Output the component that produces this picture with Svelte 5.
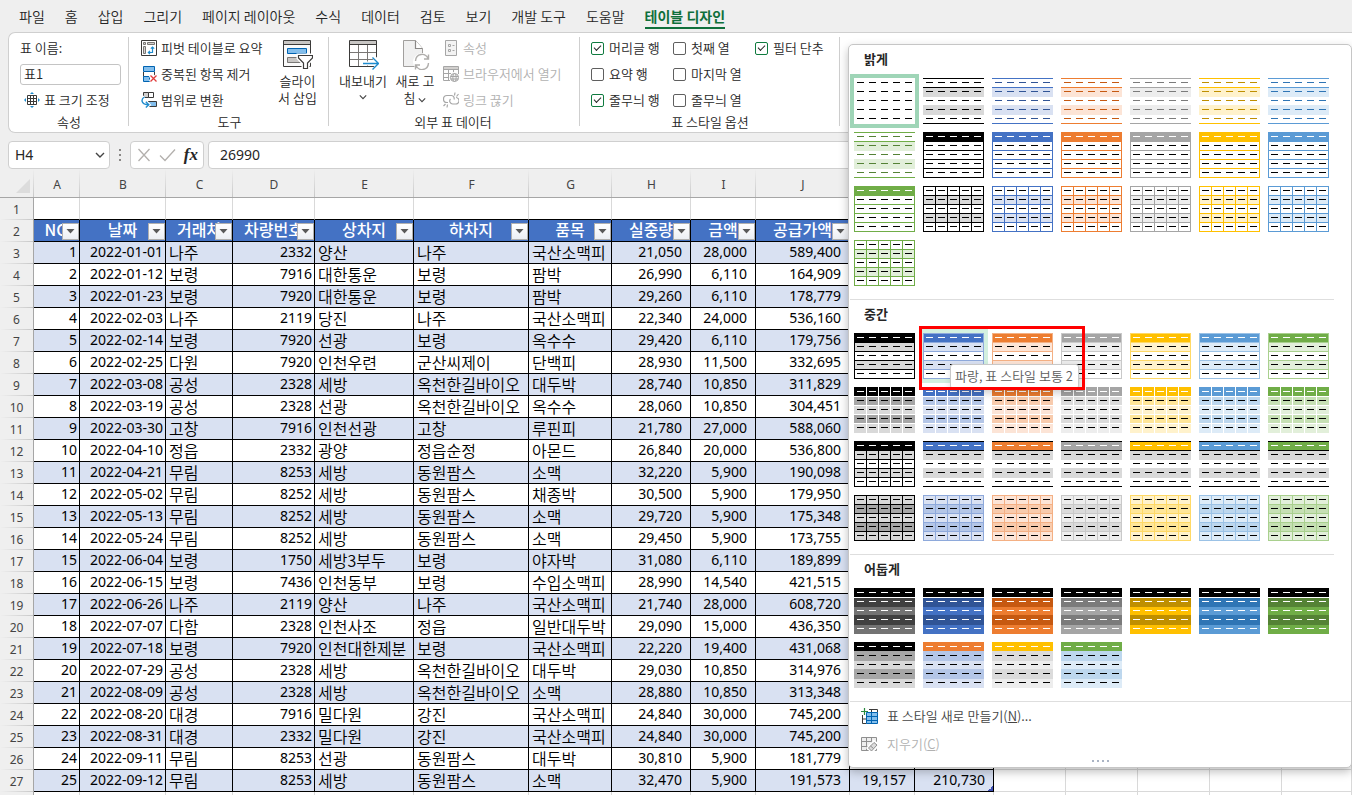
<script>
  const tabs = ['파일', '홈', '삽입', '그리기', '페이지 레이아웃', '수식', '데이터', '검토', '보기', '개발 도구', '도움말', '테이블 디자인'];

  const columns = [
    { letter: 'A', width: 46, label: 'NO', kind: 'num' },
    { letter: 'B', width: 86, label: '날짜', kind: 'num' },
    { letter: 'C', width: 67, label: '거래처', kind: 'text' },
    { letter: 'D', width: 82, label: '차량번호', kind: 'num' },
    { letter: 'E', width: 99, label: '상차지', kind: 'text' },
    { letter: 'F', width: 115, label: '하차지', kind: 'text' },
    { letter: 'G', width: 83, label: '품목', kind: 'text' },
    { letter: 'H', width: 79, label: '실중량', kind: 'money' },
    { letter: 'I', width: 65, label: '금액', kind: 'money' },
    { letter: 'J', width: 94, label: '공급가액', kind: 'money' },
    { letter: 'K', width: 65, label: '', kind: 'money' },
    { letter: 'L', width: 79, label: '', kind: 'money' }
  ];
  const spare = ['M', 'N', 'O', 'P', 'Q'];

  const source = [
    ['2022-01-01', '나주', 2332, '양산', '나주', '국산소맥피', 21050, 28000, 589400],
    ['2022-01-12', '보령', 7916, '대한통운', '보령', '팜박', 26990, 6110, 164909],
    ['2022-01-23', '보령', 7920, '대한통운', '보령', '팜박', 29260, 6110, 178779],
    ['2022-02-03', '나주', 2119, '당진', '나주', '국산소맥피', 22340, 24000, 536160],
    ['2022-02-14', '보령', 7920, '선광', '보령', '옥수수', 29420, 6110, 179756],
    ['2022-02-25', '다원', 7920, '인천우련', '군산씨제이', '단백피', 28930, 11500, 332695],
    ['2022-03-08', '공성', 2328, '세방', '옥천한길바이오', '대두박', 28740, 10850, 311829],
    ['2022-03-19', '공성', 2328, '선광', '옥천한길바이오', '옥수수', 28060, 10850, 304451],
    ['2022-03-30', '고창', 7916, '인천선광', '고창', '루핀피', 21780, 27000, 588060],
    ['2022-04-10', '정읍', 2332, '광양', '정읍순정', '아몬드', 26840, 20000, 536800],
    ['2022-04-21', '무림', 8253, '세방', '동원팜스', '소맥', 32220, 5900, 190098],
    ['2022-05-02', '무림', 8252, '세방', '동원팜스', '채종박', 30500, 5900, 179950],
    ['2022-05-13', '무림', 8252, '세방', '동원팜스', '소맥', 29720, 5900, 175348],
    ['2022-05-24', '무림', 8252, '세방', '동원팜스', '소맥', 29450, 5900, 173755],
    ['2022-06-04', '보령', 1750, '세방3부두', '보령', '야자박', 31080, 6110, 189899],
    ['2022-06-15', '보령', 7436, '인천동부', '보령', '수입소맥피', 28990, 14540, 421515],
    ['2022-06-26', '나주', 2119, '양산', '나주', '국산소맥피', 21740, 28000, 608720],
    ['2022-07-07', '다함', 2328, '인천사조', '정읍', '일반대두박', 29090, 15000, 436350],
    ['2022-07-18', '보령', 7920, '인천대한제분', '보령', '국산소맥피', 22220, 19400, 431068],
    ['2022-07-29', '공성', 2328, '세방', '옥천한길바이오', '대두박', 29030, 10850, 314976],
    ['2022-08-09', '공성', 2328, '세방', '옥천한길바이오', '소맥', 28880, 10850, 313348],
    ['2022-08-20', '대경', 7916, '밀다원', '강진', '국산소맥피', 24840, 30000, 745200],
    ['2022-08-31', '대경', 2332, '밀다원', '강진', '국산소맥피', 24840, 30000, 745200],
    ['2022-09-11', '무림', 8253, '선광', '동원팜스', '대두박', 30810, 5900, 181779],
    ['2022-09-12', '무림', 8253, '세방', '동원팜스', '소맥', 32470, 5900, 191573]
  ];
  const money = (n) => n.toLocaleString('en-US');
  const rows = source.map((r, i) => {
    const tax = Math.floor(r[8] / 10);
    return [i + 1, ...r.slice(0, 6), ...[r[6], r[7], r[8], tax, r[8] + tax].map(money)];
  });

  // base, darker shade, pale tint, middle tint, border tint
  const hues = [
    { name: '검정', base: '#000000', dark: '#000000', pale: '#d9d9d9', mid: '#a6a6a6', edge: '#000000', deep: '#404040', body: '#737373' },
    { name: '파랑', base: '#4472c4', dark: '#305496', pale: '#d9e1f2', mid: '#b4c6e7', edge: '#8ea9db' },
    { name: '주황', base: '#ed7d31', dark: '#c65911', pale: '#fce4d6', mid: '#f8cbad', edge: '#f4b084' },
    { name: '회색', base: '#a5a5a5', dark: '#7b7b7b', pale: '#ededed', mid: '#dbdbdb', edge: '#c9c9c9' },
    { name: '황금색', base: '#ffc000', dark: '#bf8f00', pale: '#fff2cc', mid: '#ffe699', edge: '#ffd966' },
    { name: '연한 파랑', base: '#5b9bd5', dark: '#2f75b5', pale: '#ddebf7', mid: '#bdd7ee', edge: '#9bc2e6' },
    { name: '녹색', base: '#70ad47', dark: '#548235', pale: '#e2efda', mid: '#c6e0b4', edge: '#a9d08e' }
  ];
  const W = '#ffffff';
  const K = '#000000';
  const ALL = [0, 9, 18, 27, 36, 45];
  const COLS = [0, 12, 24, 36, 48, 60];

  const make = {
    none: () => ({ fills: [W, W, W, W, W], dash: K }),
    lines: (h) => ({ fills: [W, h.pale, W, h.pale, W], dash: h.dark, h: [0, 9, 45], line: h.base }),
    boxed: (h) => ({ fills: [h.base, W, W, W, W], head: W, dash: K, h: ALL, v: [0, 60], line: h.base }),
    grid: (h) => ({ fills: [W, h.pale, W, h.pale, W], dash: K, h: ALL, v: COLS, line: h.base }),
    banded: (h) => ({ fills: [h.base, h.pale, W, h.pale, W], head: W, dash: K, h: ALL, v: [0, 60], line: h.edge }),
    tiles: (h) => ({ fills: [h.base, h.mid, h.pale, h.mid, h.pale], head: W, dash: K, h: [9, 18, 27, 36], v: [12, 24, 36, 48], line: W }),
    ruled: (h) =>
      h.base === K
        ? { fills: [K, h.pale, W, h.pale, W], head: W, dash: K, h: ALL, v: COLS, line: K }
        : { fills: [h.base, '#d9d9d9', W, '#d9d9d9', W], head: W, dash: K, h: [0, 9, 45], line: K },
    full: (h) => ({ fills: [h.pale, h.mid, h.pale, h.mid, h.pale], dash: K, h: ALL, v: COLS, line: h.edge }),
    dark: (h) => {
      const a = h.deep ?? h.dark;
      const b = h.body ?? h.base;
      return { fills: [K, a, b, a, b], dash: W, h: [9], line: W };
    },
    duo: (h, head) => ({ fills: [head, h.mid, h.pale, h.mid, h.pale], head: W, dash: K })
  };
  const list = (kind, label, start) =>
    hues.map((h, i) => ({ name: `${h.name}, 표 스타일 ${label} ${start + i}`, ...make[kind](h) }));

  const sections = [
    {
      title: '밝게',
      items: [
        { name: '없음', selected: true, ...make.none() },
        ...list('lines', '밝게', 1),
        ...list('boxed', '밝게', 8),
        ...list('grid', '밝게', 15)
      ]
    },
    {
      title: '중간',
      items: [
        ...list('banded', '보통', 1),
        ...list('tiles', '보통', 8),
        ...list('ruled', '보통', 15),
        ...list('full', '보통', 22)
      ]
    },
    {
      title: '어둡게',
      items: [
        ...list('dark', '어둡게', 1),
        { name: '검정, 표 스타일 어둡게 8', ...make.duo(hues[0], K) },
        { name: '파랑, 표 스타일 어둡게 9', ...make.duo(hues[1], hues[2].base) },
        { name: '회색, 표 스타일 어둡게 10', ...make.duo(hues[3], hues[4].base) },
        { name: '연한 파랑, 표 스타일 어둡게 11', ...make.duo(hues[5], hues[6].base) }
      ]
    }
  ];
  const hovered = '파랑, 표 스타일 보통 2';

  const options = [
    { label: '머리글 행', on: true },
    { label: '첫째 열', on: false },
    { label: '필터 단추', on: true },
    { label: '요약 행', on: false },
    { label: '마지막 열', on: false },
    null,
    { label: '줄무늬 행', on: true },
    { label: '줄무늬 열', on: false }
  ];
</script>

{#snippet thumb(s)}
  <svg class="thumb" width="61" height="46" viewBox="0 0 61 46" shape-rendering="crispEdges" aria-hidden="true">
    {#each [4, 2, 0, 3, 1] as i}
      <rect x="0" y={i * 9} width="61" height="10" fill={s.fills[i]} />
    {/each}
    {#each s.v ?? [] as x}
      <rect {x} y="0" width="1" height="46" fill={s.line} />
    {/each}
    {#each s.h ?? [] as y}
      <rect x="0" {y} width="61" height="1" fill={s.line} />
    {/each}
    {#each [0, 1, 2, 3, 4] as r}
      {#each [3, 15, 27, 39, 51] as x}
        <rect {x} y={4 + r * 9} width="7" height="1" fill={r === 0 && s.head ? s.head : s.dash} />
      {/each}
    {/each}
  </svg>
{/snippet}

{#snippet chevron(w)}
  <svg width={w} height="6" viewBox="0 0 10 6" fill="none" stroke="#444" stroke-width="1.4" aria-hidden="true"><path d="M1 1l4 4 4-4" /></svg>
{/snippet}

<div class="app">
  <nav class="tabs">
    {#each tabs as tab, i}
      <button class="tab" class:active={i === tabs.length - 1}>{tab}</button>
    {/each}
  </nav>

  <section class="ribbon">
    <div class="group props">
      <div class="stack">
        <label for="table-name">표 이름:</label>
        <div class="line"><input id="table-name" type="text" value="표1" /></div>
        <button class="cmd indent">
          <svg width="16" height="16" viewBox="0 0 16 16" fill="none" aria-hidden="true">
            <path d="M3.500 3.500h9v9h-9zM3.500 6.500h9M3.500 9.500h9M6.500 3.500v9M9.500 3.500v9" stroke="#3b3a39" />
            <path d="M8 0l2 2H6zM8 16l2-2H6zM0 8l2-2v4zM16 8l-2-2v4z" fill="#1e8bcd" />
          </svg>
          표 크기 조정
        </button>
      </div>
      <div class="caption">속성</div>
    </div>

    <div class="group tools">
      <div class="body">
        <div class="stack">
          <button class="cmd">
            <svg width="16" height="16" viewBox="0 0 16 16" fill="none" aria-hidden="true">
              <path d="M.5.5h15v15H.5z" fill="#fff" stroke="#3b3a39" />
              <path d="M2.500 2.500h2v2h-2zM6.500 2.500h7v2h-7zM2.500 6.500h2v7h-2z" fill="#d2d0ce" stroke="#797775" />
              <path d="M11.500 7v5.500H7.500M9.800 8.700l1.700-1.700 1.700 1.700M9 10.800l-1.700 1.700L9 14.200" stroke="#1e8bcd" stroke-width="1.200" />
            </svg>
            피벗 테이블로 요약
          </button>
          <button class="cmd">
            <svg width="16" height="16" viewBox="0 0 16 16" fill="none" aria-hidden="true">
              <path d="M2.500.500h11v5h-11z" fill="#83beec" stroke="#0063b1" />
              <path d="M2.500 6v4.500h11V6" fill="#fff" stroke="#3b3a39" />
              <path d="M2.500 10.500h6v5h-6z" fill="#83beec" stroke="#0063b1" />
              <path d="M9 9.500l6.500 6M15.500 9.500L9 15.500" stroke="#fff" stroke-width="3.500" />
              <path d="M9.500 9.500l6 6M15.500 9.500l-6 6" stroke="#e03c3c" stroke-width="1.300" />
            </svg>
            중복된 항목 제거
          </button>
          <button class="cmd">
            <svg width="16" height="16" viewBox="0 0 16 16" fill="none" aria-hidden="true">
              <path d="M2.500.500h5v5h-5z" fill="#d2d0ce" stroke="#3b3a39" />
              <path d="M7.500.500h5v5h-5z" fill="#fff" stroke="#3b3a39" />
              <path d="M6.500 9.500h9v5h-9z" fill="#83beec" stroke="#3b3a39" />
              <path d="M3.500 5C0 7-.500 12 7 12.800M4.800 9.500l3 3.300-3.300 2.700" stroke="#fff" stroke-width="3.500" />
              <path d="M3.500 5C0 7-.500 12 7 12.800M4.800 9.800l3 3-3 2.700" stroke="#1e8bcd" stroke-width="1.400" />
            </svg>
            범위로 변환
          </button>
        </div>
        <button class="big slicer">
          <svg width="32" height="32" viewBox="0 0 32 32" fill="none" aria-hidden="true">
            <path d="M2.500 2.500h27v26h-27z" fill="#fafafa" stroke="#3b3a39" />
            <path d="M3 3h26v3H3z" fill="#c8c6c4" /><path d="M3 6.500h26" stroke="#3b3a39" />
            <path d="M6.500 10.500h19v5h-19z" fill="#83beec" stroke="#0063b1" />
            <path d="M6.500 19.500h19v5h-19z" fill="#c8c6c4" stroke="#797775" />
            <path d="M17.500 17.500h14v2.500l-5 5v6h-4V25l-5-5z" fill="#fff" stroke="#fff" stroke-width="4" />
            <path d="M17.500 17.500h14v2.500l-5 5v5.500h-4V25l-5-5z" fill="#fff" stroke="#3b3a39" stroke-width="1.200" />
          </svg>
          <span>슬라이<br />서 삽입</span>
        </button>
      </div>
      <div class="caption">도구</div>
    </div>

    <div class="group external">
      <div class="body">
        <button class="big">
          <svg width="32" height="32" viewBox="0 0 32 32" fill="none" aria-hidden="true">
            <path d="M2.500 2.500h27v26h-27z" fill="#fff" />
            <path d="M3 3h26v4H3z" fill="#c8c6c4" />
            <path d="M3 14.500h26M3 21.500h26M11.500 7v21M20.500 7v21" stroke="#797775" />
            <path d="M2.500 2.500h27v26h-27zM2.500 6.500h27" stroke="#3b3a39" />
            <path d="M15 25.500h17M26 18.500l7 7-7 7" stroke="#fff" stroke-width="4" />
            <path d="M16 25.500h15M25.500 19.500l6 6-6 6" stroke="#1e8bcd" stroke-width="1.400" />
          </svg>
          <span>내보내기</span>
          {@render chevron(8)}
        </button>
        <button class="big">
          <svg width="32" height="32" viewBox="0 0 32 32" fill="none" aria-hidden="true">
            <path d="M4.500 2.500h12l7 8v18h-19z" fill="#f0f0f0" stroke="#a19f9d" />
            <path d="M16.500 2.500v8h7" fill="#fff" stroke="#8a8886" stroke-width="1.200" />
            <circle cx="23" cy="24" r="9" fill="#fff" />
            <path d="M16.500 23c.5-8 10-8.500 12.500-2.500M29.500 16.500v4.500h-4.500M29.500 25c-.5 8-10 8.500-12.500 2.500M16.500 31.500V27H21" stroke="#b0aeac" stroke-width="1.400" />
          </svg>
          <span>새로 고<br />침 {@render chevron(8)}</span>
        </button>
        <div class="stack">
          <button class="cmd" disabled>
            <svg width="16" height="16" viewBox="0 0 16 16" fill="none" stroke="#a6a6a6" aria-hidden="true">
              <path d="M2.500.500h11v15h-11z" fill="#f3f3f3" /><path d="M5.500 4.500h2v2h-2zM5.500 9.500h2v2h-2zM9.500 5.500h2M9.500 10.500h2" />
            </svg>
            속성
          </button>
          <button class="cmd" disabled>
            <svg width="16" height="16" viewBox="0 0 16 16" fill="none" stroke="#a6a6a6" aria-hidden="true">
              <path d="M.500.500h15v14H.500zM.500 3.500h15M.500 7.500h15M.500 11.500h15M5.500 3v12M10.500 3v12" />
              <path d="M1 1h14v2H1z" fill="#d2d0ce" stroke="none" />
              <circle cx="11.500" cy="11.500" r="5" fill="#f0f0f0" stroke="#fff" />
              <circle cx="11.500" cy="11.500" r="4" fill="#f0f0f0" /><ellipse cx="11.500" cy="11.500" rx="1.700" ry="4" /><path d="M7.500 10.500h8M7.500 13h8" />
            </svg>
            브라우저에서 열기
          </button>
          <button class="cmd" disabled>
            <svg width="16" height="16" viewBox="0 0 16 16" fill="none" stroke="#a6a6a6" stroke-width="1.200" aria-hidden="true">
              <path d="M5 10.500H4a3 3 0 0 1 0-7h4.500a3 3 0 0 1 2.500 4M7.500 7a3 3 0 0 0 2.500 5h2.500a3 3 0 0 0 .5-6.500M11.500 3.500L12 .500M13.500 4.500l2-2.500M4.500 12.500L4 15.500M2.500 12L.500 14" />
            </svg>
            링크 끊기
          </button>
        </div>
      </div>
      <div class="caption">외부 표 데이터</div>
    </div>

    <div class="group options">
      <div class="checks">
        {#each options as o}
          {#if o}
            <label class="check"><input type="checkbox" checked={o.on} />{o.label}</label>
          {:else}
            <span></span>
          {/if}
        {/each}
      </div>
      <div class="caption">표 스타일 옵션</div>
    </div>
  </section>

  <section class="formula">
    <div class="box name">
      <input type="text" value="H4" aria-label="이름 상자" />
      <button aria-label="이름 목록">{@render chevron(10)}</button>
    </div>
    <svg class="dots" width="4" height="14" viewBox="0 0 4 14" fill="#8a8886" aria-hidden="true"><path d="M1 1h2v2H1zM1 6h2v2H1zM1 11h2v2H1z" /></svg>
    <div class="box actions">
      <button aria-label="취소"><svg width="14" height="14" viewBox="0 0 14 14" fill="none" stroke="#b3b0ad" stroke-width="1.300"><path d="M1.500 1l11 12M12.500 1l-11 12" /></svg></button>
      <button aria-label="입력"><svg width="17" height="14" viewBox="0 0 17 14" fill="none" stroke="#b3b0ad" stroke-width="1.300"><path d="M1 7.500l5 5L16 1.500" /></svg></button>
      <button class="fx" aria-label="함수 삽입">fx</button>
    </div>
    <div class="box value"><input type="text" value="26990" aria-label="수식 입력줄" /></div>
  </section>

  <table class="sheet">
    <colgroup>
      <col style="width: 34px" />
      {#each columns as c}<col style="width: {c.width}px" />{/each}
      {#each spare as _, i}
        {#if i < spare.length - 1}<col style="width: 72px" />{:else}<col />{/if}
      {/each}
    </colgroup>
    <thead>
      <tr>
        <th class="corner"><svg width="14" height="14" viewBox="0 0 14 14" aria-hidden="true"><path d="M14 0v14H0z" fill="#dcdcdc" /></svg></th>
        {#each columns as c}<th scope="col">{c.letter}</th>{/each}
        {#each spare as s}<th scope="col">{s}</th>{/each}
      </tr>
    </thead>
    <tbody>
      <tr class="blank">
        <th scope="row">1</th>
        {#each columns as _}<td class="above"></td>{/each}
        {#each spare as _}<td></td>{/each}
      </tr>
      <tr class="fields">
        <th scope="row">2</th>
        {#each columns as c}
          <td class="in">
            <div class="field">
              <span>{c.label}</span>
              <button aria-label="{c.label} 필터"><svg width="9" height="5" viewBox="0 0 9 5" aria-hidden="true"><path d="M.500 0h8l-4 4.500z" fill="#595959" /></svg></button>
            </div>
          </td>
        {/each}
        {#each spare as _}<td></td>{/each}
      </tr>
      {#each rows as row, r}
        <tr class:band={r % 2 === 0}>
          <th scope="row">{r + 3}</th>
          {#each row as cell, c}
            <td class="in {columns[c].kind}" class:last={r === rows.length - 1 && c === row.length - 1}>{cell}</td>
          {/each}
          {#each spare as _}<td></td>{/each}
        </tr>
      {/each}
      <tr class="blank">
        <th scope="row">28</th>
        {#each columns as _}<td></td>{/each}
        {#each spare as _}<td></td>{/each}
      </tr>
    </tbody>
  </table>

  <aside class="panel">
    {#each sections as section}
      <section class="styles">
        <h2>{section.title}</h2>
        <div class="gallery">
          {#each section.items as item}
            <div class="cell" class:hover={item.name === hovered}>
              <button class="style" class:selected={item.selected} aria-label={item.name}>{@render thumb(item)}</button>
              {#if item.name === hovered}
                <div class="tip" role="tooltip">{item.name}</div>
                <div class="mark"></div>
              {/if}
            </div>
          {/each}
        </div>
      </section>
    {/each}
    <div class="menu">
      <button>
        <svg width="17" height="16" viewBox="0 0 17 16" fill="none" aria-hidden="true">
          <path d="M1.500 7v8.500h4M8 1.500h8.500v3M1.500 11h4M10.500 1v3" stroke="#3b3a39" />
          <path d="M5.500 4.500h11v11h-11z" fill="#83beec" /><path d="M5.500 4.500h11v11h-11zM5.500 8.500h11M5.500 12.500h11M10.500 4.500v11" stroke="#0063b1" />
          <path d="M3.500 0v7M0 3.500h7" stroke="#2b8a3e" stroke-width="1.200" />
        </svg>
        <span>표 스타일 새로 만들기(<u>N</u>)...</span>
      </button>
      <button disabled>
        <svg width="17" height="16" viewBox="0 0 17 16" fill="none" stroke="#8f8f8f" aria-hidden="true">
          <path d="M.500 1.500h15v13H.500zM.500 5.500h15M.500 10.500h15M5.500 1.500v13M10.500 1.500v13" fill="#eee" />
          <path d="M7 12l6-6.500 4 3.500-6 6.500z" fill="#fff" stroke="#fff" stroke-width="3" />
          <path d="M7.500 12l5.500-5.500 3 2.500-5.500 6zM9.500 10l3 2.500" fill="#ddd" />
        </svg>
        <span>지우기(<u>C</u>)</span>
      </button>
    </div>
    <div class="grip"><i></i><i></i><i></i><i></i></div>
  </aside>
</div>

<style>
  :global(body) {
    margin: 0;
    background: #efefef;
  }
  .app {
    position: relative;
    height: 100vh;
    overflow: hidden;
    background: #efefef;
    color: #262626;
    font: 13px/18px 'Noto Sans CJK KR', sans-serif;
    font-weight: 350;
  }
  button,
  input {
    font: inherit;
    color: inherit;
  }
  button {
    padding: 0;
    border: 0;
    background: none;
  }
  svg {
    flex: none;
  }

  .tabs {
    display: flex;
    gap: 20px;
    height: 32px;
    padding-left: 19px;
    align-items: flex-start;
  }
  .tab {
    height: 29px;
    padding-top: 5px;
    font-size: 14px;
    line-height: 22px;
    white-space: nowrap;
    border-bottom: 2px solid transparent;
  }
  .tab.active {
    color: #0f703b;
    font-weight: 700;
    border-bottom-color: #0f703b;
  }

  .ribbon {
    display: flex;
    margin-left: 8px;
    border: 1px solid #cfcfcf;
    border-right: 0;
    border-radius: 7px 0 0 7px;
    background: #fff;
    padding: 2px 0 1px;
  }
  .group {
    position: relative;
    display: flex;
    flex: none;
    flex-direction: column;
    box-sizing: border-box;
  }
  .group::after {
    content: '';
    position: absolute;
    top: 2px;
    bottom: 5px;
    right: 0;
    width: 1px;
    background: #cfcfcf;
  }
  .props {
    width: 120px;
    padding-left: 11px;
  }
  .tools {
    width: 200px;
    padding-left: 12px;
  }
  .external {
    width: 251px;
    padding-left: 8px;
  }
  .options {
    width: 260px;
    padding-left: 11px;
  }
  .caption {
    padding-right: 11px;
    text-align: center;
    line-height: 18px;
  }
  .body {
    display: flex;
  }
  .stack {
    display: flex;
    flex-direction: column;
  }
  .stack > * {
    height: 26px;
    line-height: 26px;
  }
  .line {
    display: flex;
    align-items: center;
  }
  .line input {
    box-sizing: border-box;
    width: 101px;
    height: 21px;
    padding: 0 3px;
    border: 1px solid #c4c4c4;
    border-radius: 3px;
    background: #fff;
  }
  .cmd {
    display: flex;
    align-items: center;
    gap: 4px;
    white-space: nowrap;
  }
  .cmd:disabled {
    color: #b1b1b1;
  }
  .indent {
    padding-left: 4px;
  }
  .big {
    display: flex;
    flex-direction: column;
    align-items: center;
    width: 52px;
    padding-top: 3px;
    line-height: 17px;
  }
  .big > span {
    padding-top: 2px;
    white-space: nowrap;
  }
  .big > svg + span + svg {
    margin-top: 5px;
  }
  .slicer {
    margin-left: 9px;
  }
  .external .stack {
    margin-left: 2px;
  }
  .checks {
    display: grid;
    grid-template-columns: repeat(3, 82px);
    grid-auto-rows: 26px;
  }
  .check {
    display: flex;
    align-items: center;
    gap: 5px;
    white-space: nowrap;
  }
  .check input {
    appearance: none;
    display: grid;
    place-items: center;
    box-sizing: border-box;
    width: 13px;
    height: 13px;
    margin: 0;
    border: 1px solid #5f5f5f;
    border-radius: 2px;
    background: #fff;
  }
  .check input:checked {
    border-color: #0f7b3f;
  }
  .check input:checked::after {
    content: '';
    width: 6px;
    height: 3px;
    margin-bottom: 2px;
    border: solid #262626;
    border-width: 0 0 1px 1px;
    rotate: -45deg;
  }

  .formula {
    display: flex;
    align-items: center;
    margin: 8px 0 0 8px;
    font: 15px/20px 'Noto Sans', 'Noto Sans CJK KR', sans-serif;
  }
  .box {
    display: flex;
    align-items: center;
    box-sizing: border-box;
    height: 28px;
    border: 1px solid #cfcfcf;
    border-radius: 4px;
    background: #fff;
  }
  .box input {
    flex: 1;
    min-width: 0;
    padding: 0;
    border: 0;
    outline: 0;
    background: none;
    font-size: 14px;
  }
  .name {
    width: 102px;
    padding: 0 4px 0 6px;
  }
  .name button {
    display: flex;
  }
  .dots {
    margin: 0 8px;
  }
  .actions {
    width: 74px;
    justify-content: space-between;
    padding: 0 5px 0 6px;
  }
  .actions button {
    display: flex;
  }
  .actions .fx {
    font: italic 700 17px/20px 'Liberation Serif', serif;
  }
  .value {
    flex: 1;
    margin-left: 4px;
    padding-left: 11px;
  }

  .sheet {
    width: 100%;
    table-layout: fixed;
    border-spacing: 0;
    background: #fff;
    font: 16px/18px 'Noto Sans CJK KR', sans-serif;
    font-weight: 350;
    color: #000;
  }
  .sheet th,
  .sheet td {
    box-sizing: border-box;
    height: 22px;
    padding: 0 2px 2px;
    border-right: 1px solid #d9d9d9;
    border-bottom: 1px solid #d9d9d9;
    white-space: nowrap;
  }
  .sheet td.text {
    padding-left: 3px;
  }
  .sheet th {
    color: #444;
    font: 12px/20px 'Noto Sans', sans-serif;
  }
  .sheet thead th {
    height: 29px;
    padding: 3px 0 0;
    border-right: 0;
    border-bottom-color: #a6a6a6;
    background: linear-gradient(#efefef, #c8c8c8) right / 1px 100% no-repeat #efefef;
  }
  .sheet thead .corner {
    padding: 6px 4px 0 0;
    text-align: right;
    line-height: 0;
  }
  .sheet tbody th {
    padding: 1px 0 0;
    border-right-color: #a6a6a6;
    border-bottom: 0;
    background: linear-gradient(90deg, #efefef, #c8c8c8) bottom / 100% 1px no-repeat #efefef;
  }
  .sheet td.above {
    border-bottom-color: #000;
  }
  .sheet td.in {
    border-color: #000;
  }
  .sheet td.num,
  .sheet td.money {
    font: 14px/18px 'Noto Sans', sans-serif;
    text-align: right;
  }
  .sheet td.money {
    padding-right: 8px;
  }
  .band td.in {
    background: #d9e1f2;
  }
  .sheet td.last {
    background: linear-gradient(135deg, transparent 50%, #3f51b5 50%) right bottom / 5px 5px no-repeat #d9e1f2;
  }
  .sheet .fields td.in {
    padding: 0;
    background: #4472c4;
    color: #fff;
    font-weight: 500;
  }
  .field {
    position: relative;
    height: 21px;
    text-align: center;
    line-height: 19px;
  }
  .field button {
    position: absolute;
    right: 0;
    bottom: 1px;
    display: grid;
    place-items: center;
    box-sizing: border-box;
    width: 17px;
    height: 17px;
    border: 1px solid #b0b0b0;
    background: linear-gradient(#fff, #eceff4);
  }

  .panel {
    position: absolute;
    top: 44px;
    right: 0;
    box-sizing: border-box;
    width: 504px;
    padding-left: 1px;
    border: 1px solid #c6c6c6;
    border-radius: 5px;
    background: #fff;
    box-shadow: 0 4px 10px rgba(0, 0, 0, 0.25);
  }
  .styles {
    margin-right: 17px;
    padding: 0 4px 13px;
    border-bottom: 1px solid #dedede;
  }
  .styles:nth-of-type(3) {
    margin-right: 0;
  }
  .styles h2 {
    height: 33px;
    margin: 0;
    padding-left: 10px;
    font-size: 13px;
    line-height: 28px;
    font-weight: 700;
  }
  .gallery {
    display: grid;
    grid-template-columns: repeat(7, 61px);
    gap: 8px;
  }
  .cell {
    position: relative;
    height: 46px;
  }
  .style,
  .thumb {
    display: block;
  }
  .style.selected {
    outline: 4px solid #9fd5b7;
  }
  .hover .style {
    outline: 4px solid #d3f0e0;
  }
  .hover {
    z-index: 1;
  }
  .tip {
    position: absolute;
    top: 31px;
    left: 27px;
    box-sizing: border-box;
    height: 25px;
    padding: 0 5px 0 4px;
    border: 1px solid #c8c8c8;
    border-radius: 3px;
    background: #fff;
    box-shadow: 2px 4px 8px rgba(0, 0, 0, 0.2);
    color: #5c5c5c;
    line-height: 22px;
    white-space: nowrap;
  }
  .mark {
    position: absolute;
    top: -7px;
    left: -4px;
    box-sizing: border-box;
    width: 166px;
    height: 64px;
    border: 3px solid #f00;
  }
  .menu {
    display: flex;
    flex-direction: column;
    padding-left: 11px;
  }
  .menu button {
    display: flex;
    align-items: center;
    gap: 9px;
    height: 28px;
    color: #444;
  }
  .menu button:disabled {
    color: #b1b1b1;
  }
  .grip {
    display: flex;
    justify-content: center;
    gap: 3px;
    height: 7px;
    padding-top: 2px;
  }
  .grip i {
    width: 2px;
    height: 2px;
    background: #aab4c4;
  }
</style>
